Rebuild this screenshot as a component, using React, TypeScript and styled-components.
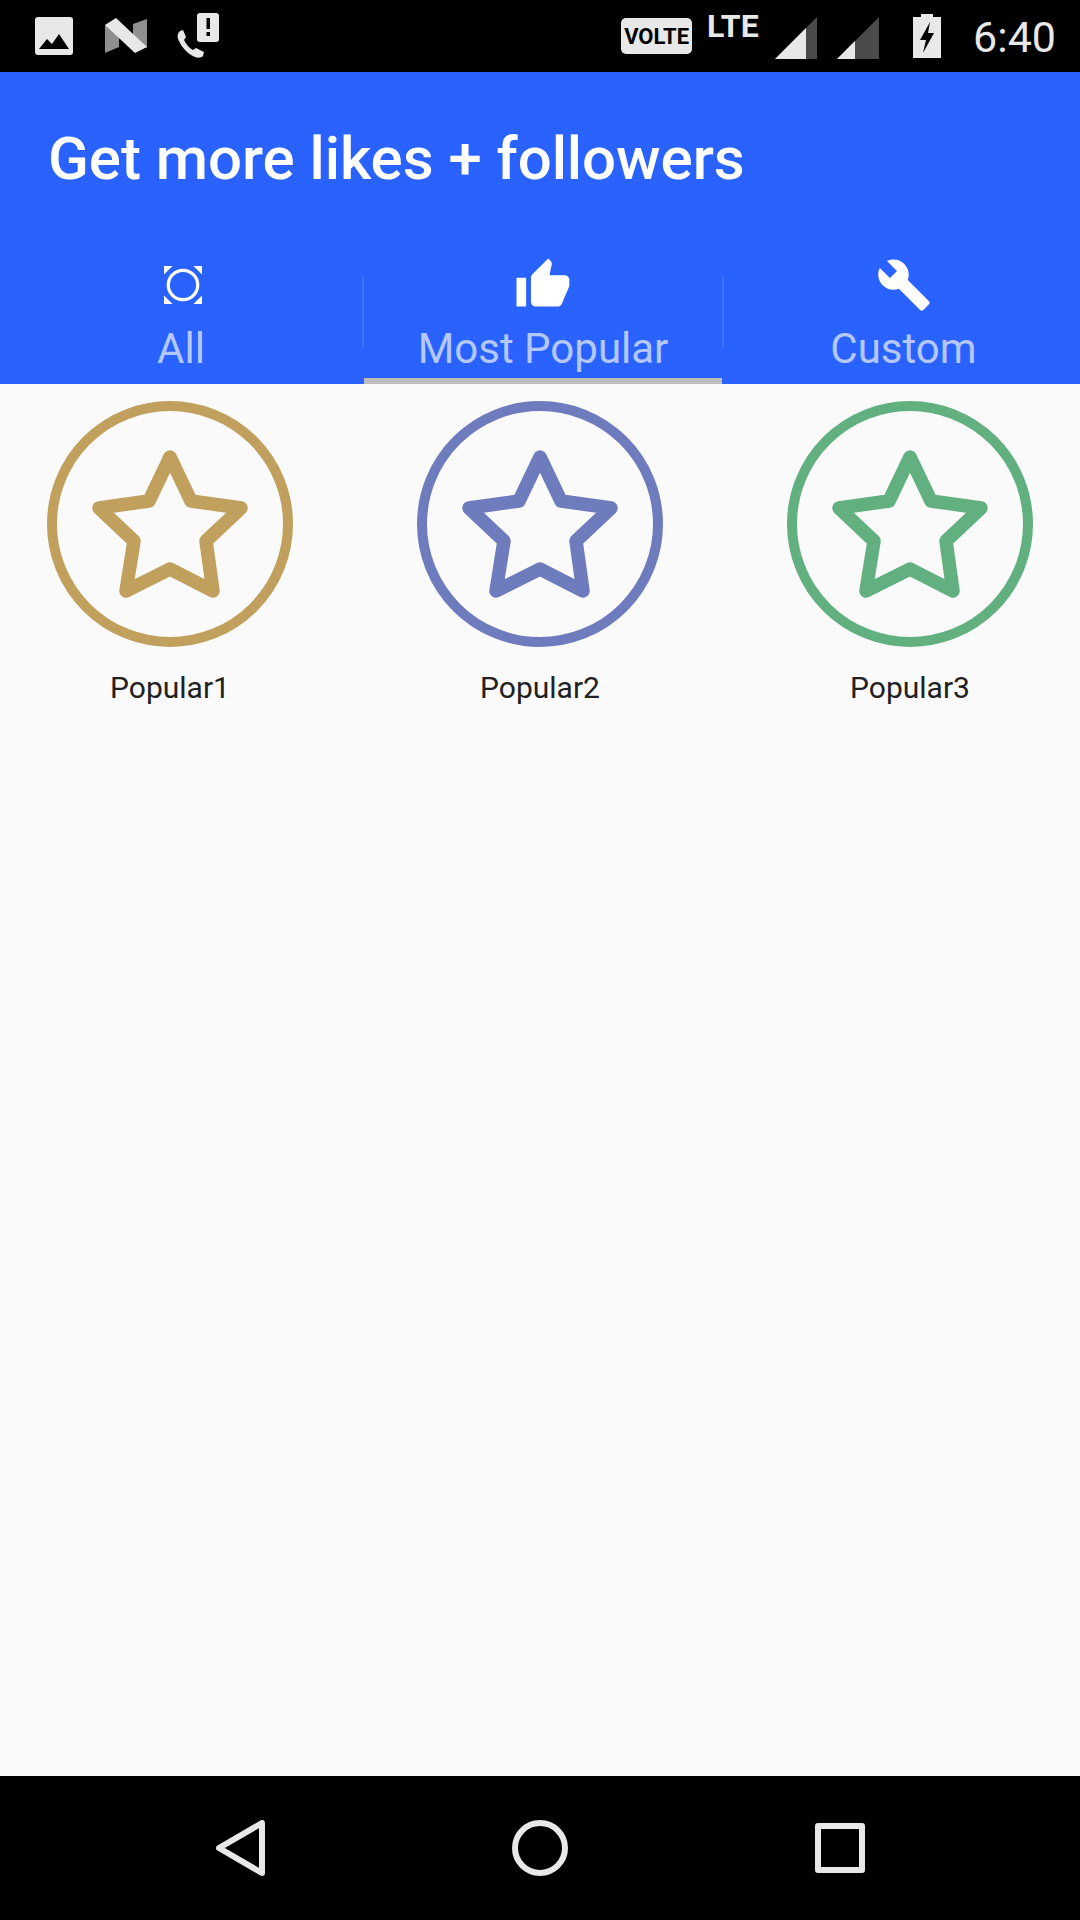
import styled, { createGlobalStyle } from "styled-components";

const GlobalStyle = createGlobalStyle`
  html, body {
    margin: 0;
    padding: 0;
    background: #fafafa;
  }
  * {
    box-sizing: border-box;
  }
`;

const tabs = [
  { label: "All", active: false, icon: "all" },
  { label: "Most Popular", active: true, icon: "thumb" },
  { label: "Custom", active: false, icon: "wrench" },
];

const packages = [
  { label: "Popular1", color: "#c0a05c" },
  { label: "Popular2", color: "#6e7bbd" },
  { label: "Popular3", color: "#62b07f" },
];

const TabIcon = ({ name }: { name: string }) => {
  if (name === "thumb") {
    return (
      <ThumbSvg viewBox="0 0 24 22" fill="#fff">
        <path d="M1 21h4V9H1v12zm22-11c0-1.1-.9-2-2-2h-6.31l.95-4.57.03-.32c0-.41-.17-.79-.44-1.06L14.17 1 7.59 7.59C7.22 7.95 7 8.45 7 9v10c0 1.1.9 2 2 2h9c.83 0 1.54-.5 1.8-1.22l3.02-7.05c.08-.23.12-.47.12-.73v-2z" />
      </ThumbSvg>
    );
  }
  if (name === "wrench") {
    return (
      <WrenchSvg viewBox="0 0 24 24" fill="#fff">
        <path d="M22.7 19l-9.1-9.1c.9-2.3.4-5-1.5-6.9-2-2-5-2.4-7.4-1.3L9 6 6 9 1.6 4.7C.4 7.1.9 10.1 2.9 12.1c1.9 1.9 4.6 2.4 6.9 1.5l9.1 9.1c.4.4 1 .4 1.4 0l2.3-2.3c.5-.4.5-1.1.1-1.4z" />
      </WrenchSvg>
    );
  }
  return (
    <AllSvg viewBox="0 0 40 40">
      <circle cx="20" cy="20" r="15.5" fill="none" stroke="#fff" strokeWidth="3.4" />
      <path d="M0 0h9L0 9zM40 0h-9l9 9zM0 40h9l-9-9zM40 40h-9l9-9z" fill="#fff" />
    </AllSvg>
  );
};

const App = () => {
  return (
    <>
      <GlobalStyle />
      <Page>
        <StatusBar>
          <StatusLeft>
            <svg width="38" height="38" viewBox="0 0 38 38">
              <rect width="38" height="38" rx="3" fill="#e8e8e8" />
              <path d="M4 32l8-10 5 5 7-10 10 15z" fill="#000" />
            </svg>
            <svg width="42" height="36" viewBox="0 0 42 36">
              <path d="M0 7l14 6v16L0 35z" fill="#8f8f8f" />
              <path d="M28 6l14-5v29l-14-8z" fill="#8f8f8f" />
              <path d="M0 7L11 0l31 29-12 6z" fill="#e8e8e8" />
            </svg>
            <CallIcon width="44" height="46" viewBox="0 0 44 46">
              <path d="M3 18c-3 3-3 6-1 10 3 7 9 13 16 16 3 1 6 1 8-1l1-4-8-4-3 2c-4-2-7-6-9-10l2-3-3-7z" fill="#e8e8e8" />
              <rect x="20" y="0" width="22" height="29" rx="3" fill="#e8e8e8" />
              <rect x="29.5" y="5" width="3.5" height="11" fill="#000" />
              <rect x="29.5" y="19" width="3.5" height="4" fill="#000" />
            </CallIcon>
          </StatusLeft>
          <StatusRight>
            <VolteBadge>VOLTE</VolteBadge>
            <LteText>LTE</LteText>
            <SignalIcon width="42" height="42" viewBox="0 0 42 42">
              <path d="M42 0v42H0z" fill="#4a4a4a" />
              <path d="M31 11v31H0z" fill="#e8e8e8" />
            </SignalIcon>
            <SignalIcon width="42" height="42" viewBox="0 0 42 42">
              <path d="M42 0v42H0z" fill="#4a4a4a" />
              <path d="M18 24v18H0z" fill="#e8e8e8" />
            </SignalIcon>
            <BatteryIcon width="28" height="44" viewBox="0 0 28 44">
              <path d="M8 0h12v3h8v41H0V3h8z" fill="#e8e8e8" />
              <path d="M17 8L7 26h6l-3 13 11-20h-6z" fill="#000" />
            </BatteryIcon>
            <Clock>6:40</Clock>
          </StatusRight>
        </StatusBar>

        <Header>
          <Title>Get more likes + followers</Title>
          <TabRow>
            {tabs.map((tab, i) => (
              <Tab key={tab.label} $active={tab.active} $divider={i < tabs.length - 1}>
                <TabIconSlot>
                  <TabIcon name={tab.icon} />
                </TabIconSlot>
                <TabLabel>{tab.label}</TabLabel>
              </Tab>
            ))}
          </TabRow>
        </Header>

        <Content>
          {packages.map((item) => (
            <Package key={item.label}>
              <svg width="246" height="246" viewBox="0 0 246 246" fill="none" stroke={item.color}>
                <circle cx="123" cy="123" r="118" strokeWidth="10" />
                <path
                  d="M123 56l21 44 50 7-35 33 7 50-43-22-44 22 8-50-35-33 50-7z"
                  strokeWidth="13.5"
                  strokeLinejoin="round"
                />
              </svg>
              <PackageLabel>{item.label}</PackageLabel>
            </Package>
          ))}
        </Content>

        <NavBar>
          <svg width="49" height="56" viewBox="0 0 49 56" fill="none" stroke="#e8e8e8" strokeWidth="6" strokeLinejoin="round">
            <path d="M46 3v50L3 28z" />
          </svg>
          <svg width="56" height="56" viewBox="0 0 56 56" fill="none" stroke="#e8e8e8" strokeWidth="6">
            <circle cx="28" cy="28" r="25" />
          </svg>
          <svg width="50" height="50" viewBox="0 0 50 50" fill="none" stroke="#e8e8e8" strokeWidth="6" strokeLinejoin="round">
            <rect x="3" y="3" width="44" height="44" />
          </svg>
        </NavBar>
      </Page>
    </>
  );
};

export default App;

const Page = styled.div`
  width: 1080px;
  height: 1920px;
  display: flex;
  flex-direction: column;
  background: #fafafa;
  font-family: Roboto, "Liberation Sans", sans-serif;
  overflow: hidden;
`;

const StatusBar = styled.div`
  height: 72px;
  flex: none;
  display: flex;
  align-items: center;
  justify-content: space-between;
  padding: 0 24px 0 35px;
  background: #000;
`;

const StatusLeft = styled.div`
  display: flex;
  align-items: center;
  gap: 32px;
`;

const CallIcon = styled.svg`
  margin-left: -2px;
  margin-top: -1px;
`;

const StatusRight = styled.div`
  display: flex;
  align-items: center;
`;

const VolteBadge = styled.div`
  width: 71px;
  height: 36px;
  display: flex;
  align-items: center;
  justify-content: center;
  background: #e8e8e8;
  border-radius: 5px;
  color: #000;
  font-size: 22px;
  font-weight: 700;
`;

const LteText = styled.div`
  margin: -20px 0 0 15px;
  width: 53px;
  color: #e8e8e8;
  font-size: 32px;
  font-weight: 700;
  line-height: 30px;
  white-space: nowrap;
`;

const SignalIcon = styled.svg`
  margin: 4px 0 0 15px;
  &:nth-of-type(2) {
    margin-left: 20px;
  }
`;

const BatteryIcon = styled.svg`
  margin-left: 34px;
`;

const Clock = styled.div`
  margin-left: 32px;
  color: #e8e8e8;
  font-size: 43px;
  line-height: 48px;
  margin-top: 2px;
`;

const Header = styled.header`
  height: 312px;
  flex: none;
  display: flex;
  flex-direction: column;
  background: #2962ff;
`;

const Title = styled.h1`
  margin: 0;
  height: 180px;
  padding: 52px 0 0 48px;
  color: #fff;
  font-size: 60px;
  font-weight: 500;
  line-height: 70px;
  letter-spacing: -0.05px;
`;

const TabRow = styled.div`
  flex: 1;
  display: grid;
  grid-template-columns: 364px 360px 356px;
`;

const Tab = styled.div<{ $active: boolean; $divider: boolean }>`
  position: relative;
  display: flex;
  flex-direction: column;
  align-items: center;
  padding-right: ${({ $divider }) => ($divider ? "2px" : "0")};
  padding-left: ${({ $divider }) => ($divider ? "0" : "3px")};
  &::before {
    content: "";
    position: absolute;
    left: 0;
    right: 2px;
    bottom: 0;
    height: 6px;
    background: ${({ $active }) => ($active ? "#bdbdbd" : "transparent")};
  }
  &::after {
    content: "";
    display: ${({ $divider }) => ($divider ? "block" : "none")};
    position: absolute;
    right: 0;
    top: 24px;
    width: 2px;
    height: 72px;
    background: #4273ff;
  }
`;

const TabIconSlot = styled.div`
  height: 72px;
  padding-bottom: 6px;
  display: flex;
  align-items: center;
  justify-content: center;
`;

const AllSvg = styled.svg`
  width: 38px;
  height: 38px;
  margin-left: 3px;
`;

const ThumbSvg = styled.svg`
  width: 58px;
  height: 53px;
  margin-top: -6px;
`;

const WrenchSvg = styled.svg`
  width: 56px;
  height: 56px;
`;

const TabLabel = styled.div`
  color: #b4c8ff;
  font-size: 42px;
  line-height: 50px;
`;

const Content = styled.main`
  flex: 1;
  display: flex;
  justify-content: space-between;
  align-items: flex-start;
  padding: 17px 47px 0;
`;

const Package = styled.div`
  display: flex;
  flex-direction: column;
  align-items: center;
  svg {
    display: block;
  }
`;

const PackageLabel = styled.div`
  margin-top: 22px;
  color: #212121;
  font-size: 30px;
  line-height: 38px;
`;

const NavBar = styled.nav`
  height: 144px;
  flex: none;
  display: flex;
  align-items: center;
  justify-content: space-between;
  padding: 0 215px 0 216px;
  background: #000;
`;
